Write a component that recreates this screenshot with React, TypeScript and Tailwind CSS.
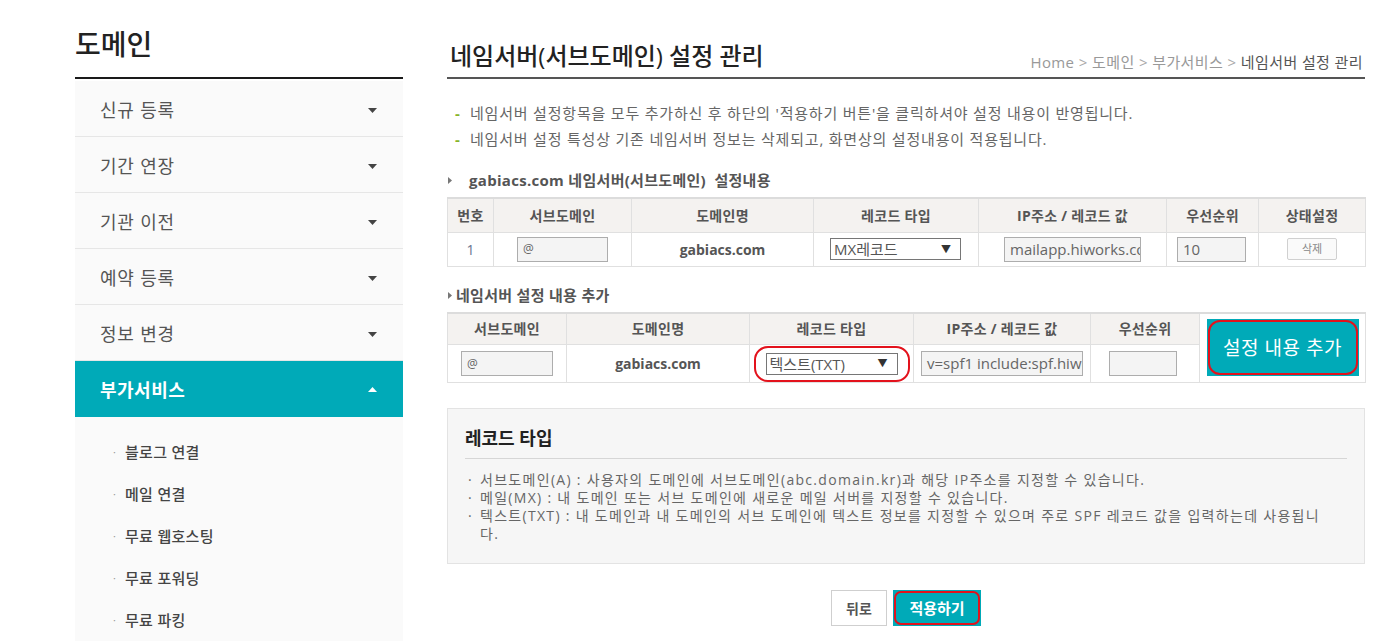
import React from "react";

const FONT = { fontFamily: '"Open Sans","Noto Sans CJK KR",sans-serif' };

function Caret({ up = false, color = "#444" }: { up?: boolean; color?: string }) {
  return (
    <svg width="9" height="5" viewBox="0 0 9 5" className="block">
      {up ? <polygon points="0,5 9,5 4.5,0" fill={color} /> : <polygon points="0,0 9,0 4.5,5" fill={color} />}
    </svg>
  );
}

function SecArrow() {
  return (
    <svg width="4" height="7" viewBox="0 0 4 7" className="block">
      <polygon points="0,0 4,3.5 0,7" fill="#777" />
    </svg>
  );
}

const menu = ["신규 등록", "기간 연장", "기관 이전", "예약 등록", "정보 변경"];
const sub = ["블로그 연결", "메일 연결", "무료 웹호스팅", "무료 포워딩", "무료 파킹"];

function Sidebar() {
  return (
    <div className="w-[328px] shrink-0 flex flex-col">
      <div className="h-[79px] border-b-2 border-[#1a1a1a] pt-[26px]">
        <div className="text-[28px] leading-[36px] font-medium text-[#222]">도메인</div>
      </div>
      <div className="h-[2px] bg-white" />
      <div className="bg-[#fafafa] flex flex-col">
        {menu.map((m) => (
          <div key={m} className="h-[56px] border-b border-[#e6e6e6] flex items-center justify-between pl-[25px] pr-[26px]">
            <span className="text-[18px] tracking-[0.8px] text-[#555] pt-[3px]">{m}</span>
            <span className="pt-[4px]">
              <Caret />
            </span>
          </div>
        ))}
        <div className="h-[56px] bg-[#00aab8] flex items-center justify-between pl-[25px] pr-[26px]">
          <span className="text-[18px] tracking-[0.5px] font-bold text-white pt-[3px]">부가서비스</span>
          <Caret up color="#fff" />
        </div>
        <div className="pt-[14px] flex flex-col">
          {sub.map((s) => (
            <div key={s} className="h-[42px] flex items-center pl-[38px] text-[15px] text-[#444]">
              <span className="text-[#999] text-[11px] w-[12px]">·</span>
              <span className="font-medium tracking-[0.3px]">{s}</span>
            </div>
          ))}
        </div>
      </div>
    </div>
  );
}

function Box({ w, children, small = false }: { w: string; children?: React.ReactNode; small?: boolean }) {
  return (
    <div
      className={`${w} h-[25px] border border-[#adadad] bg-[#f4f4f4] flex items-center px-[5px] overflow-hidden whitespace-nowrap text-[#666] ${
        small ? "text-[12px]" : "text-[15px]"
      }`}
    >
      {children}
    </div>
  );
}

function Select({ label, w }: { label: string; w: string }) {
  return (
    <div className={`${w} h-[22px] border border-[#767676] bg-white flex items-center justify-between pl-[3px] pr-[9px] text-[15px] text-[#555]`}>
      <span className="leading-[20px]">{label}</span>
      <span className="text-[10px] text-[#333]">▼</span>
    </div>
  );
}

const td = "border border-[#e0e0e0] text-center";
const thc = "bg-[#f4f2f0] border-x border-b border-[#e0e0e0] text-[14px] font-bold text-[#555] tracking-[0.3px]";

function Table1() {
  return (
    <table className="w-full table-fixed border-collapse">
      <colgroup>
        <col className="w-[46px]" />
        <col className="w-[138px]" />
        <col className="w-[182px]" />
        <col className="w-[165px]" />
        <col className="w-[188px]" />
        <col className="w-[92px]" />
        <col className="w-[107px]" />
      </colgroup>
      <thead>
        <tr className="h-[34px] border-t-2 border-[#dcdcdc]">
          {["번호", "서브도메인", "도메인명", "레코드 타입", "IP주소 / 레코드 값", "우선순위", "상태설정"].map((h) => (
            <th key={h} className={thc}>
              {h}
            </th>
          ))}
        </tr>
      </thead>
      <tbody>
        <tr className="h-[34px] bg-white">
          <td className={`${td} text-[14px] text-[#6a7590]`}>1</td>
          <td className={`${td} pl-[23px]`}>
            <Box w="w-[91px]" small>
              @
            </Box>
          </td>
          <td className={`${td} text-[14px] font-bold text-[#555]`}>gabiacs.com</td>
          <td className={`${td} pl-[16px]`}>
            <Select label="MX레코드" w="w-[131px]" />
          </td>
          <td className={`${td} pl-[25px]`}>
            <Box w="w-[137px]">mailapp.hiworks.com</Box>
          </td>
          <td className={`${td} pl-[10px]`}>
            <Box w="w-[69px]">10</Box>
          </td>
          <td className={td}>
            <div className="w-[50px] h-[22px] mx-auto border border-[#d0d0d0] rounded-[2px] bg-[#fafafa] text-[11px] text-[#888] flex items-center justify-center">
              삭제
            </div>
          </td>
        </tr>
      </tbody>
    </table>
  );
}

function Table2() {
  return (
    <table className="w-full table-fixed border-collapse">
      <colgroup>
        <col className="w-[119px]" />
        <col className="w-[183px]" />
        <col className="w-[164px]" />
        <col className="w-[177px]" />
        <col className="w-[109px]" />
        <col className="w-[166px]" />
      </colgroup>
      <tbody>
        <tr className="h-[32px] border-t-2 border-[#dcdcdc]">
          {["서브도메인", "도메인명", "레코드 타입", "IP주소 / 레코드 값", "우선순위"].map((h) => (
            <th key={h} className={thc}>
              {h}
            </th>
          ))}
          <td rowSpan={2} className="border border-[#e0e0e0] bg-white">
            <div className="relative w-[152px] h-[57px] mx-auto bg-[#00aab8] flex items-center justify-center">
              <span className="text-[19px] text-white tracking-[0.5px]">설정 내용 추가</span>
              <div className="absolute inset-[1px] rounded-[12px] border-2 border-[#e3121c]" />
            </div>
          </td>
        </tr>
        <tr className="h-[38px] bg-white">
          <td className={`${td} pl-[13px]`}>
            <Box w="w-[92px]" small>
              @
            </Box>
          </td>
          <td className={`${td} text-[14px] font-bold text-[#555]`}>gabiacs.com</td>
          <td className={`${td}`}>
            <div className="relative w-[156px] h-[36px] mx-auto flex items-center justify-center">
              <Select label="텍스트(TXT)" w="w-[132px]" />
              <div className="absolute inset-0 rounded-[14px] border-2 border-[#e3121c]" />
            </div>
          </td>
          <td className={`${td} pl-[7px]`}>
            <Box w="w-[162px]">v=spf1 include:spf.hiworks.co.kr ~all</Box>
          </td>
          <td className={`${td} pl-[18px]`}>
            <Box w="w-[68px]" />
          </td>
        </tr>
      </tbody>
    </table>
  );
}

function Main() {
  return (
    <div className="ml-[44px] w-[918px] shrink-0 flex flex-col">
      <div className="h-[79px] border-b-2 border-[#555] flex items-end justify-between pb-[5px]">
        <div className="pl-[3px] text-[24px] leading-[32px] font-medium text-[#222]">네임서버(서브도메인) 설정 관리</div>
        <div className="pr-[2px] text-[15px] leading-[20px] tracking-[0.4px] text-[#999]">
          Home <span className="text-[#aaa]">&gt;</span> 도메인 <span className="text-[#aaa]">&gt;</span> 부가서비스{" "}
          <span className="text-[#aaa]">&gt;</span> <span className="text-[#555]">네임서버 설정 관리</span>
        </div>
      </div>

      <div className="mt-[21px] flex flex-col text-[15px] leading-[26px] tracking-[0.8px] text-[#666]">
        {[
          "네임서버 설정항목을 모두 추가하신 후 하단의 '적용하기 버튼'을 클릭하셔야 설정 내용이 반영됩니다.",
          "네임서버 설정 특성상 기존 네임서버 정보는 삭제되고, 화면상의 설정내용이 적용됩니다.",
        ].map((t) => (
          <div key={t} className="flex items-center">
            <span className="ml-[8px] w-[15px] text-[#86b32a] font-bold">-</span>
            <span>{t}</span>
          </div>
        ))}
      </div>

      <div className="mt-[18px] h-[20px] flex items-center">
        <span className="ml-[1px]">
          <SecArrow />
        </span>
        <span className="ml-[17px] text-[15px] tracking-[0.3px] font-bold text-[#555] whitespace-pre">gabiacs.com 네임서버(서브도메인)  설정내용</span>
      </div>

      <div className="mt-[7px]">
        <Table1 />
      </div>

      <div className="mt-[19px] h-[20px] flex items-center">
        <span className="ml-[1px]">
          <SecArrow />
        </span>
        <span className="ml-[4px] text-[15px] tracking-[0.3px] font-bold text-[#555]">네임서버 설정 내용 추가</span>
      </div>

      <div className="mt-[6px]">
        <Table2 />
      </div>

      <div className="mt-[25px] h-[156px] border border-[#e3e3e3] bg-[#f6f6f6] px-[17px] pt-[16px]">
        <div className="text-[18px] leading-[26px] font-bold text-[#222]">레코드 타입</div>
        <div className="mt-[7px] h-[1px] bg-[#d6d6d6]" />
        <div className="mt-[12px] flex flex-col text-[14px] leading-[18px] tracking-[1.3px] text-[#666]">
          <div className="flex">
            <span className="w-[15px] pl-[3px]">·</span>
            <span>서브도메인(A) : 사용자의 도메인에 서브도메인(abc.domain.kr)과 해당 IP주소를 지정할 수 있습니다.</span>
          </div>
          <div className="flex">
            <span className="w-[15px] pl-[3px]">·</span>
            <span>메일(MX) : 내 도메인 또는 서브 도메인에 새로운 메일 서버를 지정할 수 있습니다.</span>
          </div>
          <div className="flex">
            <span className="w-[15px] pl-[3px]">·</span>
            <span>
              <span className="whitespace-nowrap">텍스트(TXT) : 내 도메인과 내 도메인의 서브 도메인에 텍스트 정보를 지정할 수 있으며 주로 SPF 레코드 값을 입력하는데 사용됩니</span>
              <br />
              다.
            </span>
          </div>
        </div>
      </div>

      <div className="mt-[26px] flex justify-center gap-[6px]">
        <div className="w-[56px] h-[36px] border border-[#cfcfcf] bg-white flex items-center justify-center text-[14px] font-bold text-[#555]">
          뒤로
        </div>
        <div className="relative w-[88px] h-[36px] bg-[#00aab8] flex items-center justify-center text-[15px] font-bold text-white">
          적용하기
          <div className="absolute inset-[1px] rounded-[7px] border-2 border-[#e3121c]" />
        </div>
      </div>
    </div>
  );
}

export default function App() {
  return (
    <div className="w-[1375px] h-[643px] bg-white overflow-hidden flex pl-[75px]" style={FONT}>
      <Sidebar />
      <Main />
    </div>
  );
}
